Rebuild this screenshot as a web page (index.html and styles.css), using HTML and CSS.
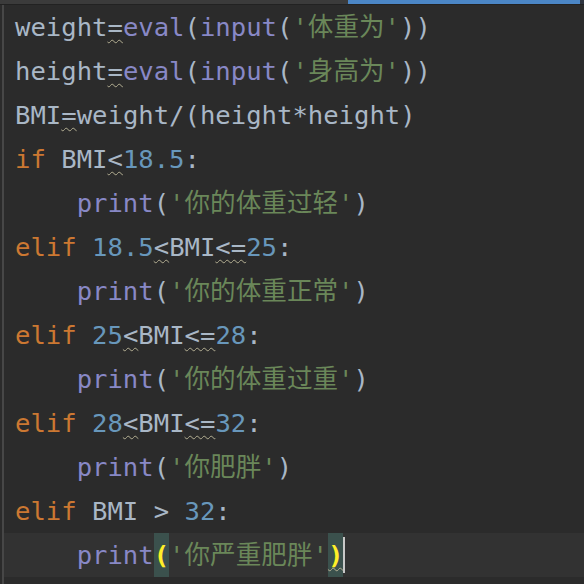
FILE: index.html
```html
<!DOCTYPE html>
<html lang="zh">
<head>
<meta charset="utf-8">
<title>BMI</title>
<link rel="stylesheet" href="styles.css">
</head>
<body>
<div class="window">
  <div class="topbar">
    <div class="tab-gray"></div>
    <div class="tab-blue"></div>
    <div class="tab-rest"></div>
  </div>
  <div class="editor">
    <div class="line"><span class="id">weight</span><span class="warn">=</span><span class="fn">eval</span>(<span class="fn">input</span>(<span class="str">'体重为'</span>))</div>
    <div class="line"><span class="id">height</span><span class="warn">=</span><span class="fn">eval</span>(<span class="fn">input</span>(<span class="str">'身高为'</span>))</div>
    <div class="line">BMI<span class="warn">=</span>weight/(height*height)</div>
    <div class="line"><span class="kw">if</span> BMI<span class="warn">&lt;</span><span class="num">18.5</span>:</div>
    <div class="line">    <span class="fn">print</span>(<span class="str">'你的体重过轻'</span>)</div>
    <div class="line"><span class="kw">elif</span> <span class="num">18.5</span><span class="warn">&lt;</span>BMI<span class="warn">&lt;=</span><span class="num">25</span>:</div>
    <div class="line">    <span class="fn">print</span>(<span class="str">'你的体重正常'</span>)</div>
    <div class="line"><span class="kw">elif</span> <span class="num">25</span><span class="warn">&lt;</span>BMI<span class="warn">&lt;=</span><span class="num">28</span>:</div>
    <div class="line">    <span class="fn">print</span>(<span class="str">'你的体重过重'</span>)</div>
    <div class="line"><span class="kw">elif</span> <span class="num">28</span><span class="warn">&lt;</span>BMI<span class="warn">&lt;=</span><span class="num">32</span>:</div>
    <div class="line">    <span class="fn">print</span>(<span class="str">'你肥胖'</span>)</div>
    <div class="line"><span class="kw">elif</span> BMI &gt; <span class="num">32</span>:</div>
    <div class="line current">    <span class="fn">print</span><span class="match">(</span><span class="str">'你严重肥胖'</span><span class="match warn-end">)</span><span class="caret"></span></div>
  </div>
</div>
</body>
</html>
```
FILE: styles.css
```css
html, body {
  margin: 0;
  padding: 0;
  background: #2b2b2b;
  width: 584px;
  height: 584px;
  overflow: hidden;
}

.window {
  display: flex;
  flex-direction: column;
  width: 584px;
  height: 584px;
}

.topbar {
  display: flex;
  height: 4px;
  border-bottom: 1px solid #222222;
  flex: 0 0 auto;
}

.tab-gray {
  flex: 0 0 348px;
  background: #3b3b3b;
}

.tab-blue {
  flex: 0 0 232px;
  background: #4b86c6;
}

.tab-rest {
  flex: 1;
  background: #2f3540;
}

.editor {
  margin-left: 2px;
  border-left: 2px solid #474747;
  padding-left: 11px;
  flex: 1;
  font-family: "DejaVu Sans Mono", "Noto Sans CJK SC", monospace;
  font-size: 25.6px;
  color: #a9b7c6;
}

.line {
  height: 44px;
  line-height: 44px;
  white-space: pre;
}

.line.current {
  background: #323232;
  margin-left: -11px;
  padding-left: 11px;
}

.kw { color: #cc7832; }
.num { color: #6897bb; }
.str { color: #6a8759; }
.fn { color: #8888c6; }

.warn {
  text-decoration: underline wavy #b3ae92;
  text-decoration-thickness: 1px;
  text-underline-offset: 3px;
}

.match {
  display: inline-block;
  height: 44px;
  line-height: 44px;
  vertical-align: top;
  background: #3b514d;
  color: #ffef28;
  font-weight: bold;
}

.warn-end {
  text-decoration: underline wavy #b3ae92;
  text-decoration-thickness: 1px;
  text-underline-offset: 3px;
}

.caret {
  display: inline-block;
  width: 2px;
  height: 36px;
  vertical-align: top;
  margin-top: 4px;
  background: #c8c8c8;
}
```
